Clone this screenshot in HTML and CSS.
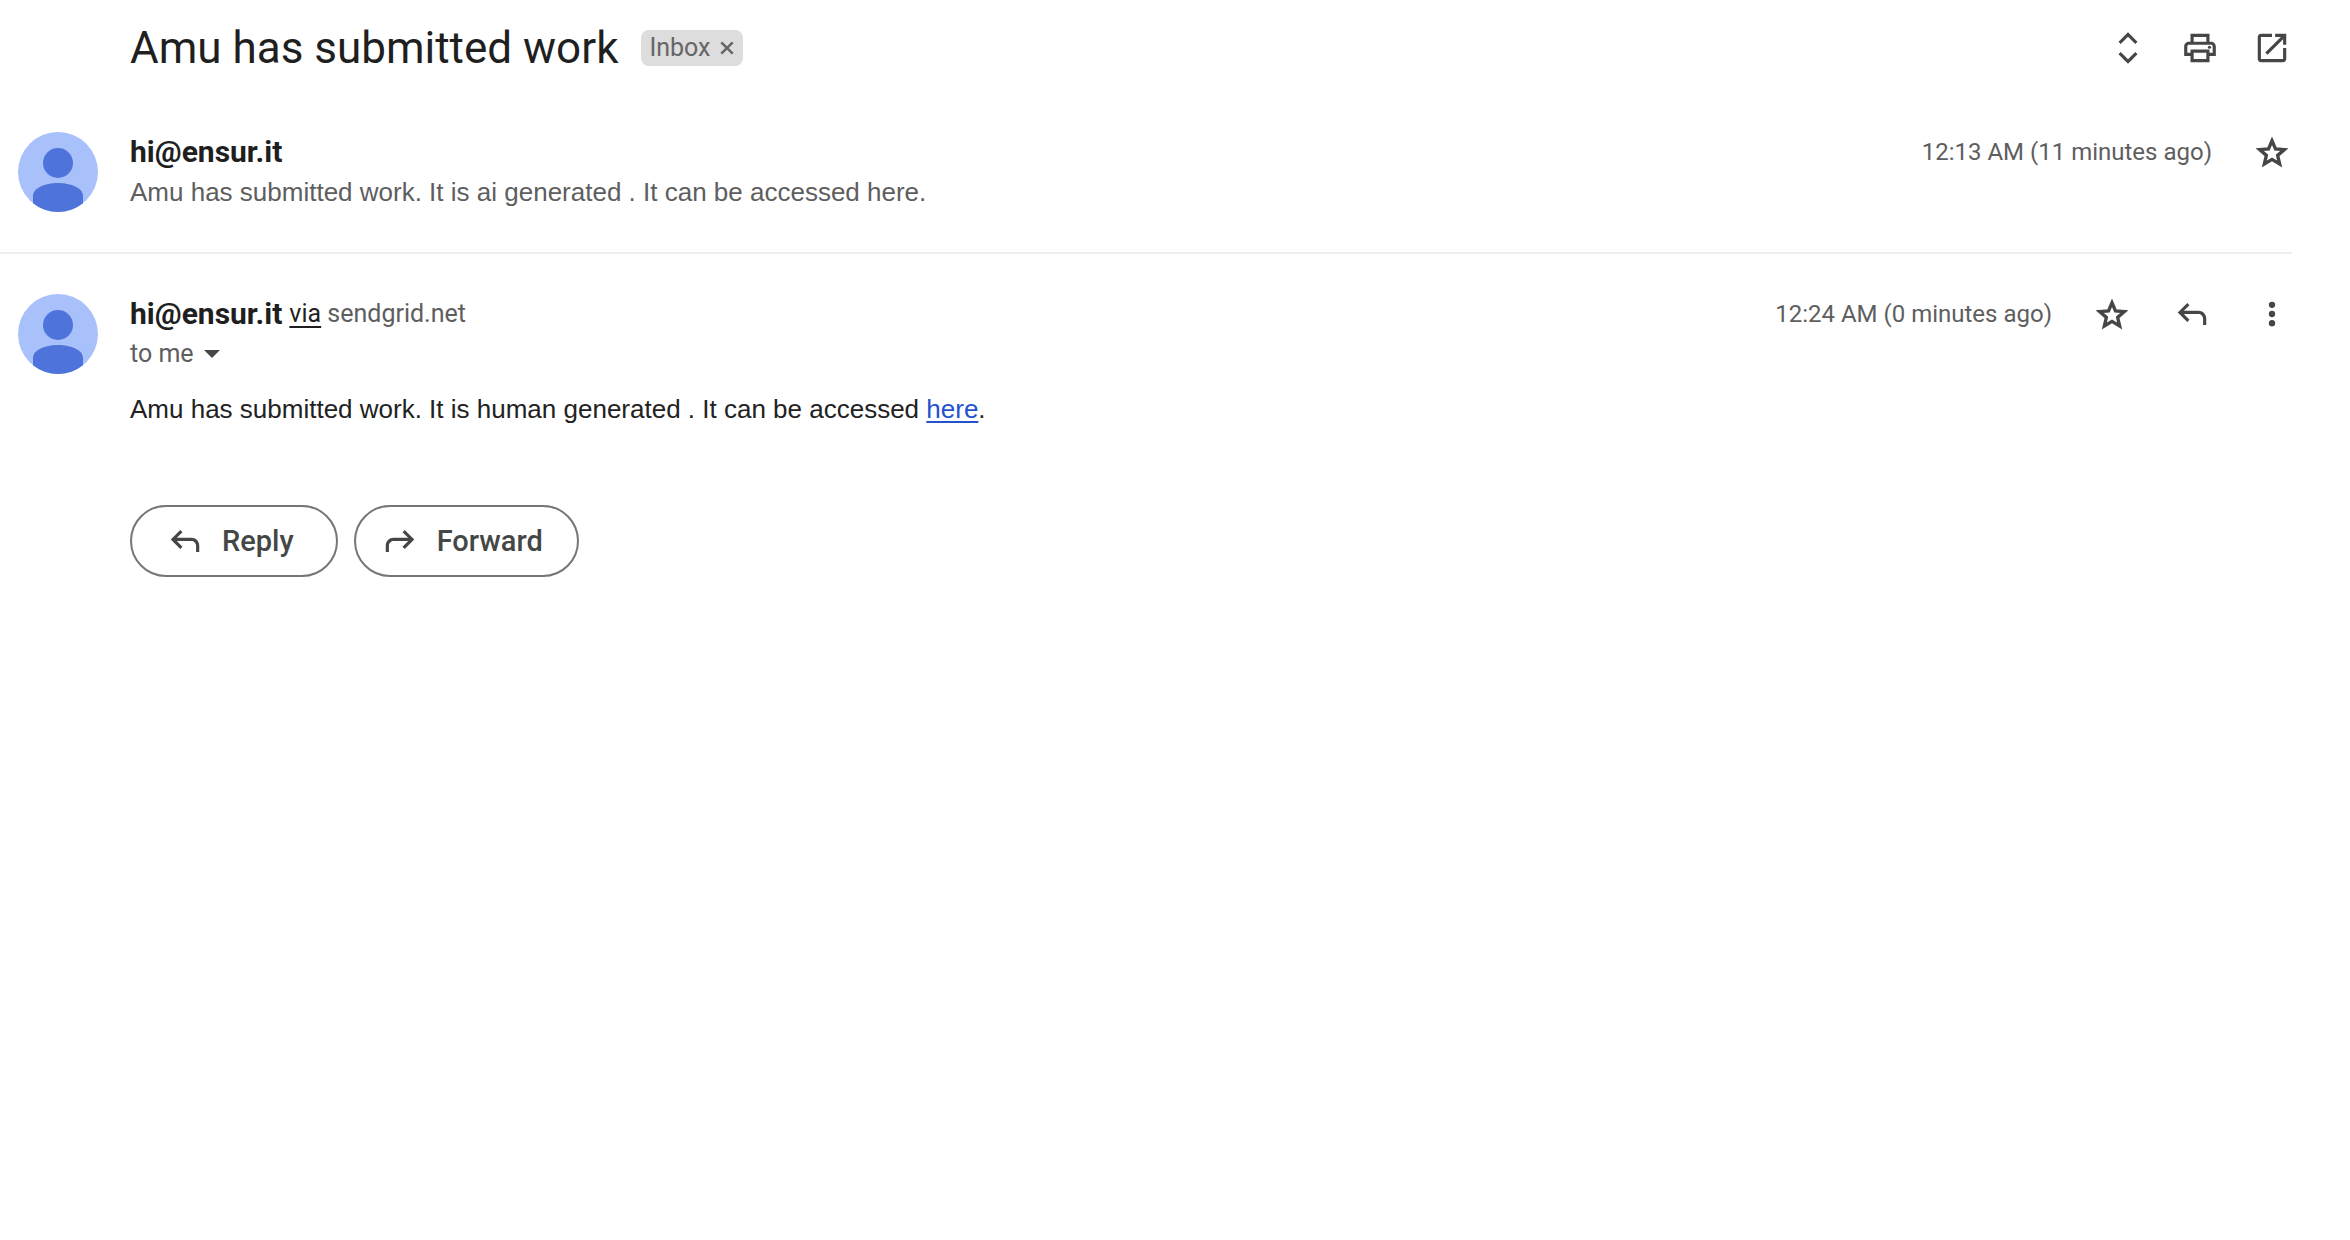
FILE: index.html
```html
<!DOCTYPE html>
<html lang="en">
<head>
<meta charset="utf-8">
<title>Amu has submitted work</title>
<link rel="stylesheet" href="styles.css">
</head>
<body>
<svg class="sprite" aria-hidden="true">
  <symbol id="person" viewBox="0 0 80 80">
    <circle cx="40" cy="40" r="40" fill="#a8c1fb"/>
    <circle cx="40" cy="31" r="15" fill="#4e73da"/>
    <path d="M15 71.200V64c0-8 12-13 25-13s25 5 25 13v7.200A40 40 0 0 1 15 71.200z" fill="#4e73da"/>
  </symbol>
  <symbol id="star" viewBox="0 0 24 24">
    <path d="M12 4.300l2.200 5.100 5.600.5-4.250 3.650 1.300 5.450L12 16.100 7.150 19l1.300-5.450L4.200 9.900l5.600-.5z" transform="translate(0 .6)" fill="none" stroke="currentColor" stroke-width="2.100"/>
  </symbol>
  <symbol id="reply" viewBox="0 0 24 24">
    <path d="M19 19v-4c0-1.660-1.340-3-3-3H6.830l3.590 3.590L9 17l-6-6 6-6 1.410 1.410L6.830 10H16c2.760 0 5 2.240 5 5v4h-2z"/>
  </symbol>
  <symbol id="forward" viewBox="0 0 24 24">
    <path d="M5 19v-4c0-1.660 1.340-3 3-3h9.170l-3.590 3.590L15 17l6-6-6-6-1.410 1.410L17.170 10H8c-2.760 0-5 2.240-5 5v4h2z"/>
  </symbol>
</svg>
<main class="thread">
  <header class="thread-header">
    <h1 class="subject">Amu has submitted work</h1>
    <span class="label">Inbox
      <button class="label-remove" aria-label="Remove label Inbox"><svg viewBox="0 0 14 14"><path d="M2 2l10 10M12 2L2 12" fill="none" stroke="currentColor" stroke-width="2.200"/></svg></button>
    </span>
    <div class="tools">
      <button class="icon-button" aria-label="Expand all"><svg viewBox="0 0 24 24"><path d="M12 4.830L16.600 9.400 18 8l-6-6-6 6 1.400 1.400L12 4.830zm0 14.340L7.400 14.600 6 16l6 6 6-6-1.400-1.400L12 19.170z"/></svg></button>
      <button class="icon-button" aria-label="Print all"><svg viewBox="0 0 24 24"><path d="M19 8h-1V3H6v5H5c-1.660 0-3 1.340-3 3v6h4v4h12v-4h4v-6c0-1.660-1.340-3-3-3zM8 5h8v3H8V5zm8 14H8v-4h8v4zm2-4v-2H6v2H4v-4c0-.55.45-1 1-1h14c.55 0 1 .45 1 1v4h-2z"/><circle cx="18" cy="11.500" r="1"/></svg></button>
      <button class="icon-button" aria-label="In new window"><svg viewBox="0 0 24 24"><path d="M19 19H5V5h7V3H5c-1.110 0-2 .9-2 2v14c0 1.100.89 2 2 2h14c1.100 0 2-.9 2-2v-7h-2v7zM14 3v2h3.590l-9.830 9.830 1.410 1.410L19 6.410V10h2V3h-7z"/></svg></button>
    </div>
  </header>

  <article class="message">
    <svg class="avatar" aria-hidden="true"><use href="#person"/></svg>
    <div class="content">
      <div class="topline">
        <h2 class="sender">hi@ensur.it</h2>
        <div class="meta">
          <time class="when">12:13 AM (11 minutes ago)</time>
          <button class="icon-button" aria-label="Star"><svg><use href="#star"/></svg></button>
        </div>
      </div>
      <p class="snippet">Amu has submitted work. It is ai generated . It can be accessed here.</p>
    </div>
  </article>

  <article class="message">
    <svg class="avatar" aria-hidden="true"><use href="#person"/></svg>
    <div class="content">
      <div class="topline">
        <h2 class="sender">hi@ensur.it</h2>
        <span class="via"><a href="#via">via</a> sendgrid.net</span>
        <div class="meta">
          <time class="when">12:24 AM (0 minutes ago)</time>
          <button class="icon-button" aria-label="Star"><svg><use href="#star"/></svg></button>
          <button class="icon-button" aria-label="Reply"><svg><use href="#reply"/></svg></button>
          <button class="icon-button" aria-label="More"><svg viewBox="0 0 24 24"><circle cx="12" cy="6.200" r="2"/><circle cx="12" cy="12" r="2"/><circle cx="12" cy="17.800" r="2"/></svg></button>
        </div>
      </div>
      <button class="recipient">to me <svg viewBox="0 0 16 8"><path d="M0 0h16L8 8z"/></svg></button>
      <p class="body">Amu has submitted work. It is human generated . It can be accessed <a href="#work">here</a>.</p>
      <div class="actions">
        <button class="pill pill-reply"><svg><use href="#reply"/></svg>Reply</button>
        <button class="pill pill-forward"><svg><use href="#forward"/></svg>Forward</button>
      </div>
    </div>
  </article>
</main>
</body>
</html>
```
FILE: styles.css
```css
* { box-sizing: border-box; }
body {
  margin: 0;
  background: #fff;
  color: #1f1f1f;
  font-family: "Google Sans", Roboto, sans-serif;
  font-size: 25px;
  line-height: 40px;
}
h1, h2, p { margin: 0; }
button {
  margin: 0;
  padding: 0;
  border: 0;
  background: none;
  color: inherit;
  font: inherit;
  cursor: pointer;
}
svg { display: block; fill: currentColor; }
.sprite { position: absolute; width: 0; height: 0; }

.thread { padding-right: 58px; }
.thread-header {
  display: flex;
  align-items: center;
  height: 96px;
  padding-left: 130px;
}
.subject { font-size: 44px; font-weight: 400; }
.label {
  display: flex;
  align-items: center;
  gap: 8px;
  height: 36px;
  margin-left: 23px;
  padding: 0 8px;
  border-radius: 8px;
  background: #ddd;
  color: #666;
}
.label-remove svg { width: 16px; height: 16px; }
.tools { display: flex; gap: 32px; margin-left: auto; }
.icon-button { color: #444746; }
.icon-button svg { width: 40px; height: 40px; padding: 1px; }

.message {
  display: flex;
  gap: 32px;
  padding: 36px 0 40px 18px;
}
.message + .message { border-top: 2px solid #eee; padding-top: 40px; }
.avatar { flex: none; width: 80px; height: 80px; }
.content { flex: 1; }
.topline { display: flex; align-items: center; height: 40px; }
.sender { font-size: 30px; font-weight: 700; }
.via { margin-left: 7px; color: #5e5e5e; }
.via a { color: #1f1f1f; text-underline-offset: 4px; }
.meta { display: flex; align-items: center; gap: 40px; margin-left: auto; }
.when { color: #5e5e5e; font-size: 24px; }
.snippet, .body { font-family: Arial, "Liberation Sans", sans-serif; font-size: 26px; }
.snippet { color: #5e5e5e; }
.recipient { display: flex; align-items: center; gap: 10px; color: #5e5e5e; }
.recipient svg { width: 16px; height: 8px; color: #444746; }
.body { margin-top: 15px; color: #222; }
.body a { color: #2352cf; text-underline-offset: 3px; }
.actions { display: flex; gap: 16px; margin-top: 76px; }
.pill {
  display: flex;
  align-items: center;
  gap: 18px;
  height: 72px;
  border: 2px solid #747775;
  border-radius: 36px;
  color: #444746;
  font-size: 29px;
  font-weight: 500;
}
.pill-reply { padding: 0 42px 0 34px; }
.pill-forward { padding: 0 34px 0 25px; }
.pill svg { width: 38px; height: 38px; }
```
